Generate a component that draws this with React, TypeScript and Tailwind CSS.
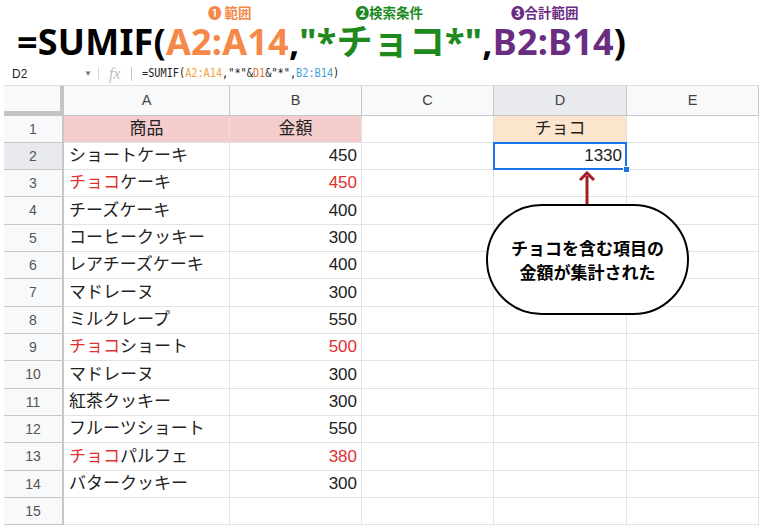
const cols = ["A", "B", "C", "D", "E"];
const heights = [27, 27, 27, 28, 27, 27, 28, 27, 27, 28, 27, 27, 28, 27, 27];

type Row = { name?: string; red?: boolean; price?: string };

const rows: Row[] = [
  {},
  { name: "ショートケーキ", price: "450" },
  { name: "ケーキ", red: true, price: "450" },
  { name: "チーズケーキ", price: "400" },
  { name: "コーヒークッキー", price: "300" },
  { name: "レアチーズケーキ", price: "400" },
  { name: "マドレーヌ", price: "300" },
  { name: "ミルクレープ", price: "550" },
  { name: "ショート", red: true, price: "500" },
  { name: "マドレーヌ", price: "300" },
  { name: "紅茶クッキー", price: "300" },
  { name: "フルーツショート", price: "550" },
  { name: "パルフェ", red: true, price: "380" },
  { name: "バタークッキー", price: "300" },
  {},
];

const cellFont = { fontFamily: '"Liberation Sans", "Noto Sans CJK JP", sans-serif' };

function NameCell({ row, i }: { row: Row; i: number }) {
  if (i === 0)
    return (
      <div className="flex items-center justify-center border-r border-b border-[#e2e2e2] bg-[#f4cccc] text-[17px] text-[#222]">
        商品
      </div>
    );
  return (
    <div className="flex items-center border-r border-b border-[#e2e2e2] pl-[5px] text-[17px] text-[#222]">
      {row.red && <span className="text-[#e0312f]">チョコ</span>}
      {row.name}
    </div>
  );
}

export default function App() {
  return (
    <div className="relative h-[530px] w-[764px] overflow-hidden bg-white">
      {/* annotations */}
      <div
        className="flex h-[21px] items-start pt-[6px] text-[13.5px] font-bold leading-[13px] text-nowrap"
        style={{ fontFamily: '"Noto Sans CJK JP", sans-serif' }}
      >
        <span className="ml-[208px] text-[#f6894a]">❶ 範囲</span>
        <span className="ml-[104px] text-[#1e8a1e]">❷検索条件</span>
        <span className="ml-[88px] text-[#6a2d82]">❸合計範囲</span>
      </div>

      {/* big formula */}
      <div
        className="flex h-[41px] items-center pl-[17px] text-[36px] font-bold leading-[30px] tracking-[0.2px] text-black"
        style={{ fontFamily: '"Noto Sans", "Noto Sans CJK JP", sans-serif' }}
      >
        <span>=SUMIF(</span>
        <span className="text-[#f6894a]">A2:A14</span>
        <span>,</span>
        <span className="text-[#1e8a1e]">"*チョコ*"</span>
        <span>,</span>
        <span className="text-[#6a2d82]">B2:B14</span>
        <span>)</span>
      </div>

      {/* formula bar */}
      <div className="flex h-[23px] items-center" style={cellFont}>
        <span className="ml-[12px] w-[72px] text-[12px] text-[#222]">D2</span>
        <span className="text-[8px] text-[#777]">▼</span>
        <span className="ml-[6px] h-[14px] w-px bg-[#dadce0]" />
        <span
          className="ml-[10px] text-[16px] italic text-[#bdbdbd]"
          style={{ fontFamily: '"Liberation Serif", serif' }}
        >
          fx
        </span>
        <span className="ml-[11px] h-[14px] w-px bg-[#c4c4c4]" />
        <span
          className="ml-[10px] origin-left scale-x-[0.89] text-[11.5px] text-[#222]"
          style={{ fontFamily: '"DejaVu Sans Mono", monospace' }}
        >
          =SUMIF(<span className="text-[#f4a13d]">A2:A14</span>,"*"&amp;
          <span className="text-[#e9743a]">D1</span>&amp;"*",
          <span className="text-[#3fa0d6]">B2:B14</span>)
        </span>
      </div>

      {/* sheet */}
      <div
        className="ml-[4px] grid w-[755px] border-t border-[#dadce0] grid-cols-[60px_166px_132px_132px_133px_132px]"
        style={{ ...cellFont, gridTemplateRows: `30px ${heights.map((h) => h + "px").join(" ")}` }}
      >
        <div className="border-r-[4px] border-b-[5px] border-[#c4c4c4] bg-[#f8f9fa]" />
        {cols.map((c) => (
          <div
            key={c}
            className={`flex items-center justify-center border-r border-b border-[#c7c7c7] text-[14.5px] text-[#444] ${
              c === "D" ? "bg-[#e8eaed]" : "bg-[#f8f9fa]"
            }`}
          >
            {c}
          </div>
        ))}

        {rows.map((row, i) => (
          <div key={i} className="contents">
            <div
              className={`flex items-center justify-center border-r-2 border-b border-[#c7c7c7] text-[14px] text-[#555] ${
                i === 1 ? "bg-[#e8eaed]" : "bg-[#f8f9fa]"
              }`}
            >
              {i + 1}
            </div>
            <NameCell row={row} i={i} />
            {i === 0 ? (
              <div className="flex items-center justify-center border-r border-b border-[#e2e2e2] bg-[#f4cccc] text-[17px] text-[#222]">
                金額
              </div>
            ) : (
              <div
                className={`flex items-center justify-end border-r border-b border-[#e2e2e2] pr-[4px] text-[17px] ${
                  row.red ? "text-[#e0312f]" : "text-[#222]"
                }`}
              >
                {row.price}
              </div>
            )}
            <div className="border-r border-b border-[#e2e2e2]" />
            {i === 0 ? (
              <div className="flex items-center justify-center border-r border-b border-[#e2e2e2] bg-[#fce5cd] text-[17px] text-[#222]">
                チョコ
              </div>
            ) : i === 1 ? (
              <div className="relative flex items-center justify-end border-b border-r border-[#e2e2e2] pr-[4px] text-[17px] text-[#222]">
                <div className="absolute -top-px -left-px -right-px -bottom-px border-2 border-[#1a73e8]" />
                <div className="absolute -right-[4px] -bottom-[4px] h-[7px] w-[7px] border border-white bg-[#1a73e8]" />
                1330
              </div>
            ) : (
              <div className="border-r border-b border-[#e2e2e2]" />
            )}
            <div className="border-r border-b border-[#e2e2e2]" />
          </div>
        ))}
      </div>

      {/* arrow */}
      <svg className="absolute left-[578px] top-[171px]" width="18" height="36" viewBox="0 0 18 36">
        <line x1="9" y1="5" x2="9" y2="35" stroke="#a51d24" strokeWidth="3" />
        <path d="M2 9 L9 2 L16 9" fill="none" stroke="#a51d24" strokeWidth="3" />
      </svg>

      {/* bubble */}
      <div
        className="absolute left-[486px] top-[204px] flex h-[111px] w-[203px] flex-col items-center justify-center rounded-full border-2 border-black bg-white text-[17px] font-bold leading-[24px] text-black"
        style={{ fontFamily: '"Noto Sans CJK JP", sans-serif' }}
      >
        <span>チョコを含む項目の</span>
        <span>金額が集計された</span>
      </div>
    </div>
  );
}
